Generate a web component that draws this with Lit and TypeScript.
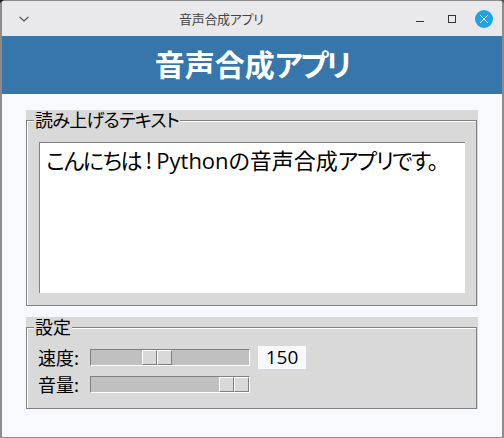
import { LitElement, html, css } from "lit";
import { customElement } from "lit/decorators.js";

@customElement("app-root")
export class AppRoot extends LitElement {
  static styles = css`
    :host {
      display: block;
      width: 504px;
      height: 438px;
      font-family: "Noto Sans CJK JP", "Noto Sans", sans-serif;
      font-feature-settings: "palt" 1;
      color: #000;
    }
    .window {
      box-sizing: border-box;
      width: 504px;
      height: 438px;
      border: 2px solid #8c8c8c;
      border-top-width: 1px;
      border-bottom-width: 1px;
      background: #f8f9fe;
      display: flex;
      flex-direction: column;
      position: relative;
    }
    .corner { position: absolute; top: -1px; width: 4px; height: 3px; }
    .corner.l { left: -2px; background: #222; clip-path: polygon(0 0, 100% 0, 0 100%); }
    .corner.r { right: -2px; background: #555; clip-path: polygon(0 0, 100% 0, 100% 100%); }
    .titlebar {
      height: 35px;
      flex: none;
      background: #e9e9eb;
      display: flex;
      align-items: center;
      color: #444;
      font-size: 13px;
    }
    .chev { margin-left: 17px; width: 10px; height: 6px; display: block; }
    .title { margin-left: 150px; width: 85px; white-space: nowrap; letter-spacing: -0.3px; }
    .controls { margin-left: auto; display: flex; align-items: center; gap: 24px; padding-right: 9px; }
    .close { margin-left: -5px; }
    .banner {
      height: 58px;
      flex: none;
      background: #3776ab;
      color: #fff;
      font-size: 30px;
      font-weight: 700;
      display: flex;
      align-items: center;
      justify-content: center;
      line-height: 1;
      padding-bottom: 4px;
      box-sizing: border-box;
    }
    .banner span { letter-spacing: -2.4px; }
    .content {
      padding: 16px 24px 0;
      display: flex;
      flex-direction: column;
      gap: 11px;
    }
    .frame {
      background: #d9d9d9;
      padding-top: 10px;
      width: 452px;
      box-sizing: border-box;
      position: relative;
    }
    .legend {
      position: absolute;
      left: 8px;
      top: 0;
      background: #d9d9d9;
      font-size: 18px;
      line-height: 19px;
      padding: 0 1px 1px;
    }
    .legend.long { letter-spacing: -0.7px; }
    .groove {
      width: 451px;
      box-sizing: border-box;
      border: 1px solid #808080;
      box-shadow: inset 1px 1px 0 #fff;
    }
    .text-groove { height: 186px; padding: 21px 11px 11px 12px; }
    .textbox {
      background: #fff;
      height: 151px;
      padding: 1px 6px;
      border-top: 1px solid #808080;
      border-left: 1px solid #808080;
      font-size: 22px;
      line-height: 30px;
      box-sizing: border-box;
      white-space: nowrap;
    }
    .kana { letter-spacing: -1.4px; }
    .bang { padding: 0 4px; }
    .latin { font-family: "Open Sans", sans-serif; }
    .set-groove {
      height: 82px;
      padding: 18px 0 0 11px;
      display: flex;
      flex-direction: column;
      gap: 4px;
    }
    .row { display: flex; align-items: center; height: 23px; font-size: 18px; }
    .lbl { width: 52px; padding-bottom: 2px; box-sizing: border-box; }
    .trough {
      box-sizing: border-box;
      width: 160px;
      height: 17px;
      background: #c0c0c0;
      border-top: 1px solid #808080;
      border-left: 1px solid #808080;
      border-bottom: 1px solid #fff;
      border-right: 1px solid #fff;
      display: flex;
    }
    .spacer { flex: none; }
    .thumb {
      box-sizing: border-box;
      width: 15px;
      height: 15px;
      background: #d9d9d9;
      border-top: 1px solid #fff;
      border-left: 1px solid #fff;
      border-right: 1px solid #808080;
      border-bottom: 1px solid #808080;
    }
    .value {
      margin-left: 8px;
      width: 48px;
      height: 23px;
      background: #f8f9fe;
      font-family: "Open Sans", sans-serif;
      font-size: 19px;
      line-height: 23px;
      text-align: center;
    }
  `;

  private slider(offset: number) {
    return html`<div class="trough">
      <div class="spacer" style="width:${offset}px"></div>
      <div class="thumb"></div><div class="thumb"></div>
    </div>`;
  }

  render() {
    return html`<div class="window">
      <div class="corner l"></div>
      <div class="corner r"></div>
      <div class="titlebar">
        <svg class="chev" viewBox="0 0 10 6"><path d="M.5 .8 L5 5 L9.5 .8" fill="none" stroke="#444" stroke-width="1.1"/></svg>
        <div class="title">音声合成アプリ</div>
        <div class="controls">
          <svg width="8" height="8" viewBox="0 0 8 8"><path d="M0 6.5H8" stroke="#333" stroke-width="1"/></svg>
          <svg width="8" height="8" viewBox="0 0 8 8"><rect x=".5" y=".5" width="7" height="7" fill="none" stroke="#333" stroke-width="1"/></svg>
          <svg class="close" width="18" height="18" viewBox="0 0 18 18"><circle cx="9" cy="9" r="9" fill="#1fa3e4"/><path d="M5 5L13 13M13 5L5 13" stroke="#fff" stroke-width="1"/></svg>
        </div>
      </div>
      <div class="banner"><div>音声合成<span>アプリ</span></div></div>
      <div class="content">
        <div class="frame">
          <div class="legend long">読み上げるテキスト</div>
          <div class="groove text-groove">
            <div class="textbox"><span class="kana">こんにちは</span><span class="bang">!</span><span class="latin">Python</span>の音声合成<span class="kana">アプリです。</span></div>
          </div>
        </div>
        <div class="frame">
          <div class="legend">設定</div>
          <div class="groove set-groove">
            <div class="row"><span class="lbl">速度:</span>${this.slider(51)}<div class="value">150</div></div>
            <div class="row"><span class="lbl">音量:</span>${this.slider(128)}</div>
          </div>
        </div>
      </div>
    </div>`;
  }
}
